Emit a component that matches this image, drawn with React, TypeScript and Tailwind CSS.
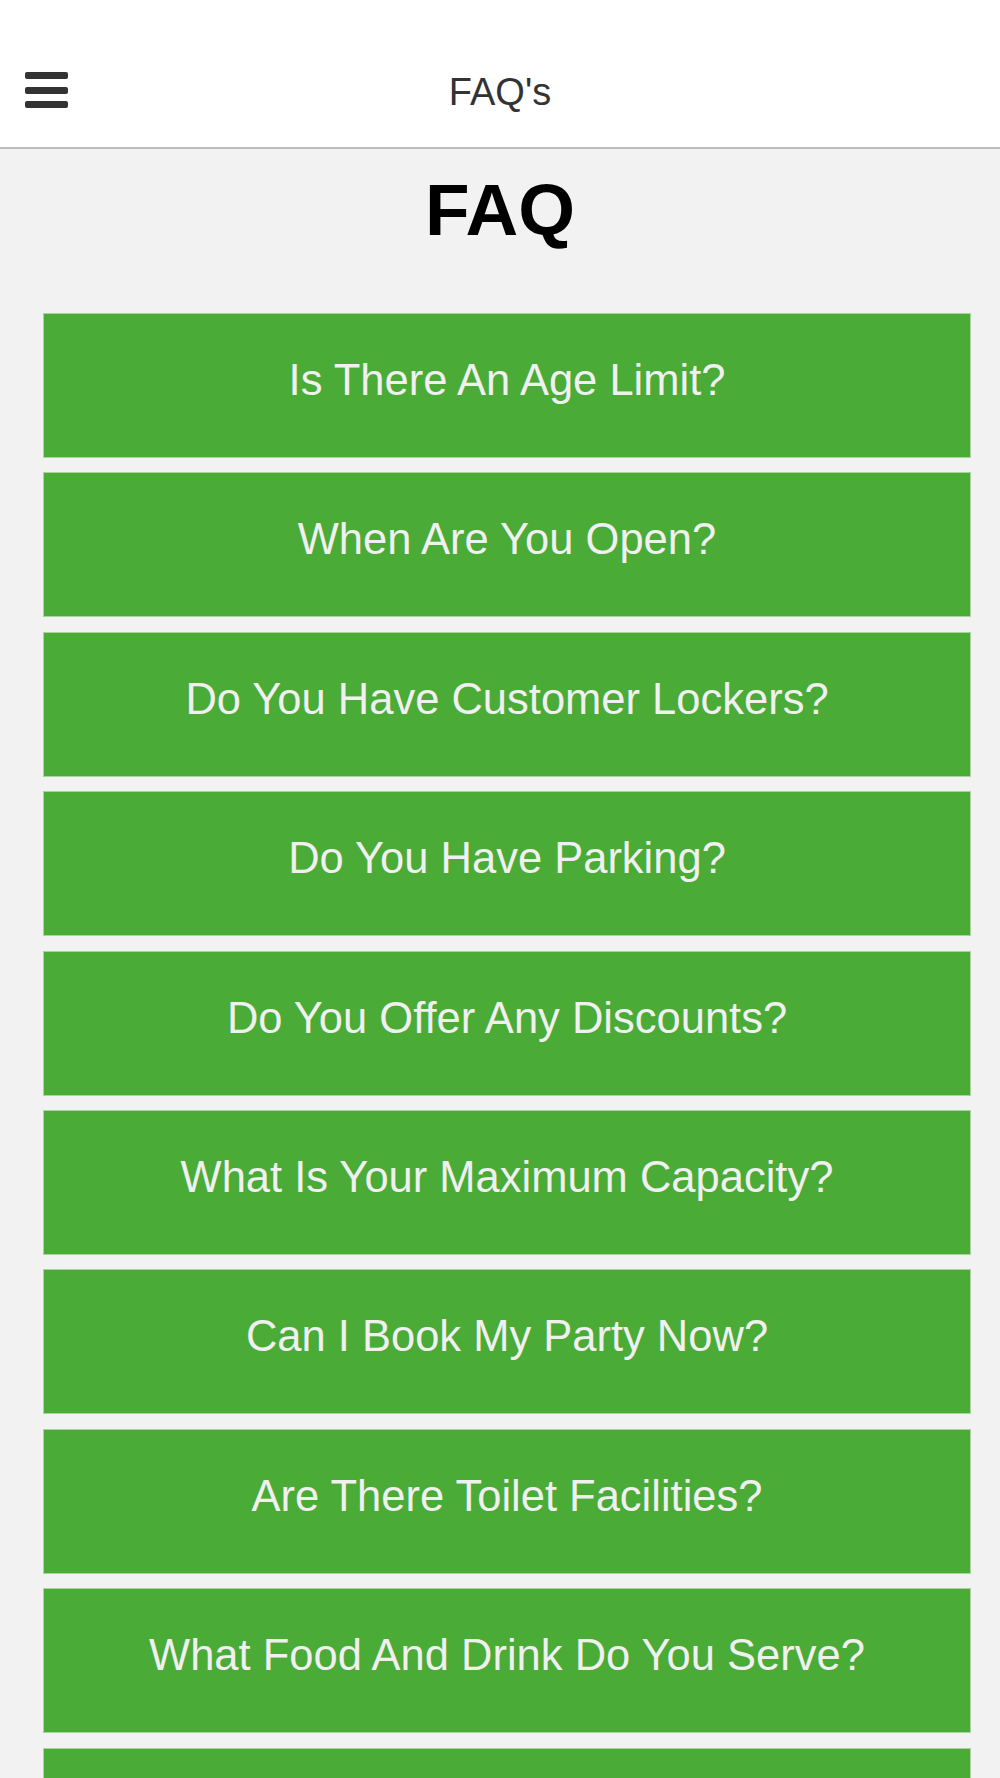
import React from "react";

const questions = [
  "Is There An Age Limit?",
  "When Are You Open?",
  "Do You Have Customer Lockers?",
  "Do You Have Parking?",
  "Do You Offer Any Discounts?",
  "What Is Your Maximum Capacity?",
  "Can I Book My Party Now?",
  "Are There Toilet Facilities?",
  "What Food And Drink Do You Serve?",
  "",
];

export default function App() {
  return (
    <div
      className="min-h-screen bg-[#f2f2f2]"
      style={{ fontFamily: '"Liberation Sans", Arial, Helvetica, sans-serif' }}
    >
      <header className="h-[149px] bg-white border-b-2 border-[#bdbdbd] grid grid-cols-[1fr_auto_1fr] items-start">
        <div className="pl-[25px] pt-[72px]">
          <div className="flex flex-col gap-[7.5px] w-[43px]">
            <span className="block h-[7px] rounded-[2px] bg-[#333]" />
            <span className="block h-[7px] rounded-[2px] bg-[#333]" />
            <span className="block h-[7px] rounded-[2px] bg-[#333]" />
          </div>
        </div>
        <div className="text-[38px] leading-none text-[#333] pt-[73px]">FAQ's</div>
        <div />
      </header>

      <h1 className="mt-[24px] text-center text-[73px] leading-none font-bold text-black">
        FAQ
      </h1>

      <div className="mt-[67px] ml-[43px] mr-[29px] flex flex-col gap-[14.4px]">
        {questions.map((q, i) => (
          <div
            key={i}
            className="h-[145px] shrink-0 bg-[#4aab37] border border-[#a9d49f] pt-[41px] text-center text-[43.5px] leading-[1.15] text-[#f0f0f0]"
          >
            {q}
          </div>
        ))}
      </div>
    </div>
  );
}
